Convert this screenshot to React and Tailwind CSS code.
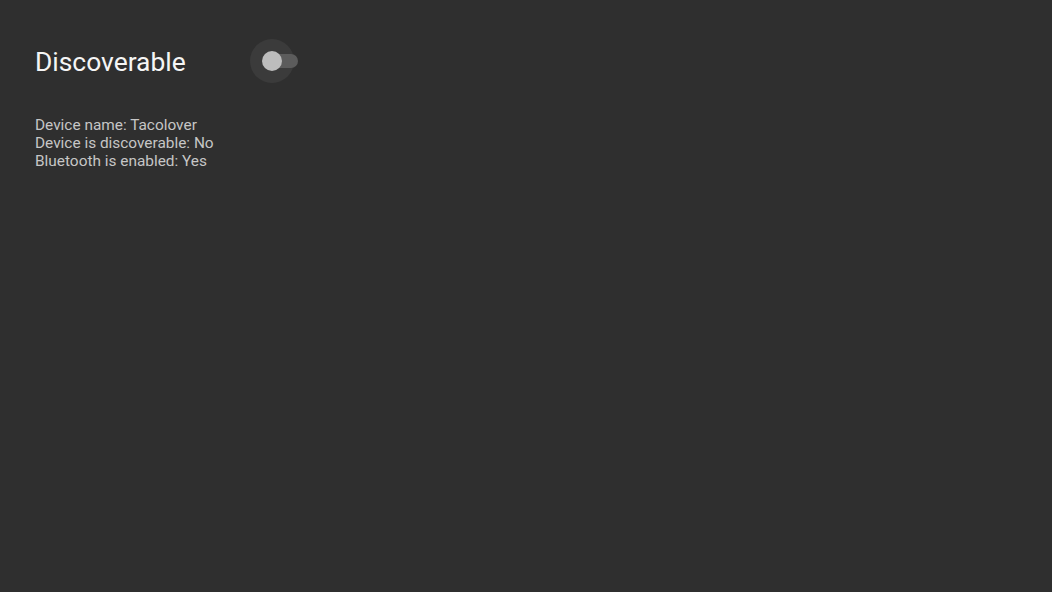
import React, { useState } from 'react';

const App = () => {
  const [discoverable, setDiscoverable] = useState(false);

  return (
    <div className="w-[1052px] h-[592px] bg-[#2f2f2f] font-['Roboto',sans-serif] pl-[35px] pt-[39px]">
      {/* Header row */}
      <div className="flex items-center h-[44px]">
        <h1 className="text-[26.4px] leading-[30px] text-[#f5f5f5] w-[215px] pt-[2px]">Discoverable</h1>
        <button
          type="button"
          onClick={() => setDiscoverable(!discoverable)}
          className="relative w-[48px] h-[44px] flex items-center"
        >
          <span className="absolute left-0 top-0 w-[44px] h-[44px] rounded-full bg-[#3b3b3b]" />
          <span className="absolute left-[22px] top-[15px] w-[26px] h-[14px] rounded-full bg-[#5c5c5c]" />
          <span className="absolute left-[12px] top-[12px] w-[20px] h-[20px] rounded-full bg-[#bdbdbd]" />
        </button>
      </div>

      {/* Status */}
      <div className="mt-[33px] text-[15.4px] leading-[18px] text-[#c6c6c6]">
        <p>Device name: Tacolover</p>
        <p>Device is discoverable: {discoverable ? 'Yes' : 'No'}</p>
        <p>Bluetooth is enabled: Yes</p>
      </div>
    </div>
  );
};

export default App;
